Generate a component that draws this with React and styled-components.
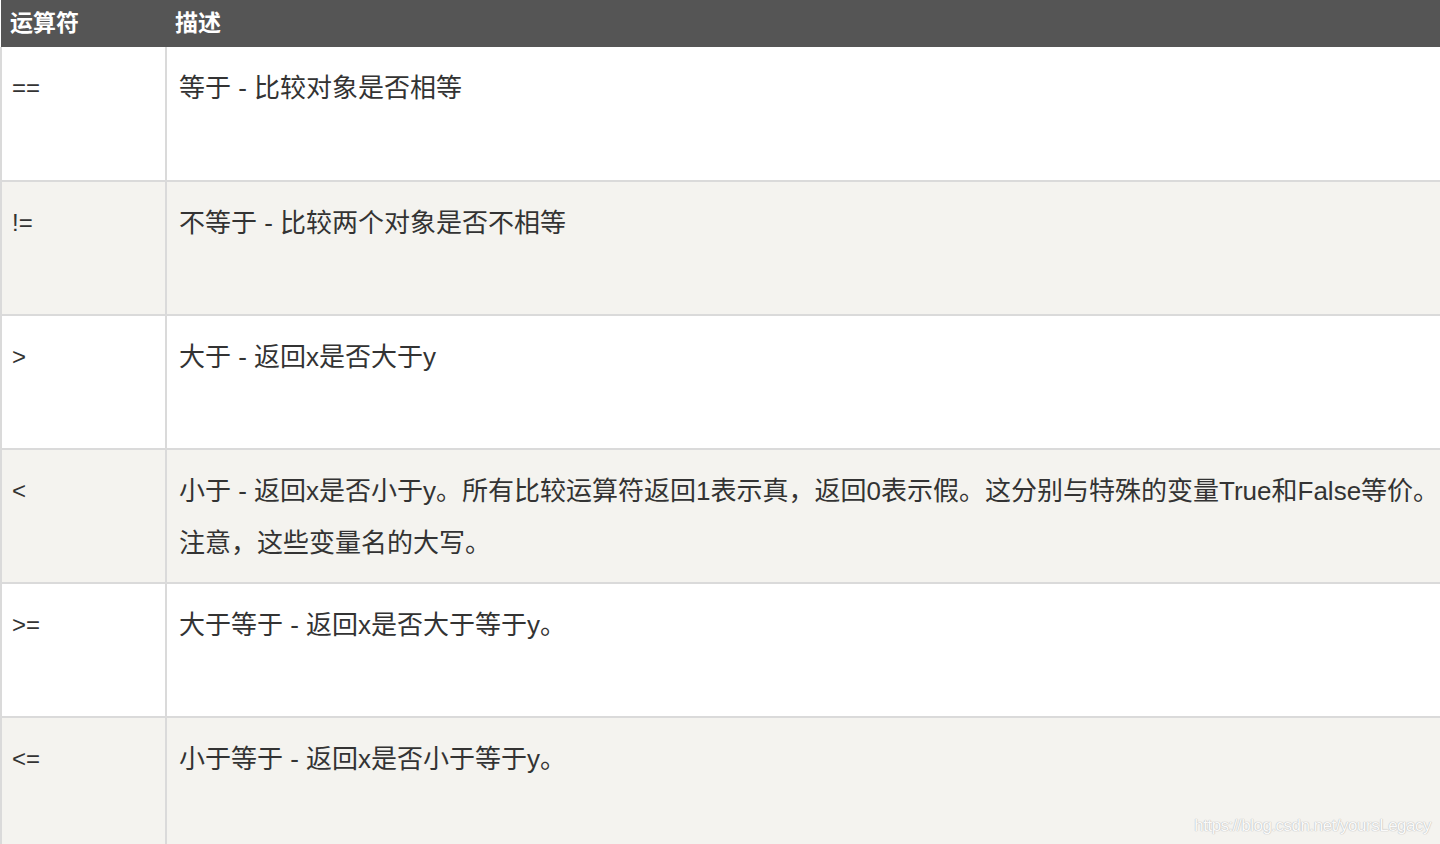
import React from "react";
import styled, { createGlobalStyle } from "styled-components";

const GlobalStyle = createGlobalStyle`
  html, body {
    margin: 0;
    padding: 0;
    overflow: hidden;
    background: #ffffff;
  }
  body {
    font-family: "Liberation Sans", "Noto Sans CJK SC", sans-serif;
  }
`;

const Page = styled.div`
  position: relative;
  width: 1440px;
  height: 844px;
  overflow: hidden;
`;

const Table = styled.table`
  width: 1444px;
  border-collapse: collapse;
  table-layout: fixed;
`;

const HeadCell = styled.th`
  width: ${(p) => p.$width || "auto"};
  height: 47px;
  padding: 0 0 5px ${(p) => p.$pad || "9px"};
  background: #555555;
  color: #ffffff;
  font-size: 23px;
  font-weight: 700;
  text-align: left;
  vertical-align: middle;
  box-sizing: border-box;
`;

const Row = styled.tr`
  background: ${(p) => (p.$even ? "#f4f3ef" : "#ffffff")};
`;

const Cell = styled.td`
  height: 134px;
  box-sizing: border-box;
  padding: 15px 0 0 ${(p) => (p.$op ? "10px" : "12px")};
  border: 2px solid #dadada;
  border-top: none;
  vertical-align: top;
  color: #333333;
  font-size: ${(p) => (p.$op ? "24px" : "26px")};
  line-height: 52px;
  white-space: nowrap;
`;

const Watermark = styled.div`
  position: absolute;
  right: 9px;
  bottom: 8px;
  font-family: "Liberation Sans", sans-serif;
  font-size: 17px;
  color: #fafafa;
  text-shadow: 0 0 1px #b8b8b8, 0 0 1px #b8b8b8;
  letter-spacing: -0.5px;
`;

const rows = [
  { op: "==", desc: ["等于 - 比较对象是否相等"] },
  { op: "!=", desc: ["不等于 - 比较两个对象是否不相等"] },
  { op: ">", desc: ["大于 - 返回x是否大于y"] },
  {
    op: "<",
    desc: [
      "小于 - 返回x是否小于y。所有比较运算符返回1表示真，返回0表示假。这分别与特殊的变量True和False等价。",
      "注意，这些变量名的大写。",
    ],
  },
  { op: ">=", desc: ["大于等于 - 返回x是否大于等于y。"] },
  { op: "<=", desc: ["小于等于 - 返回x是否小于等于y。"] },
];

export default function App() {
  return (
    <Page>
      <GlobalStyle />
      <Table>
        <thead>
          <tr>
            <HeadCell $width="165px">运算符</HeadCell>
            <HeadCell $pad="9px">描述</HeadCell>
          </tr>
        </thead>
        <tbody>
          {rows.map((r, i) => (
            <Row key={i} $even={i % 2 === 1}>
              <Cell $op>{r.op}</Cell>
              <Cell>
                {r.desc.map((line, j) => (
                  <div key={j}>{line}</div>
                ))}
              </Cell>
            </Row>
          ))}
        </tbody>
      </Table>
      <Watermark>https://blog.csdn.net/yoursLegacy</Watermark>
    </Page>
  );
}
